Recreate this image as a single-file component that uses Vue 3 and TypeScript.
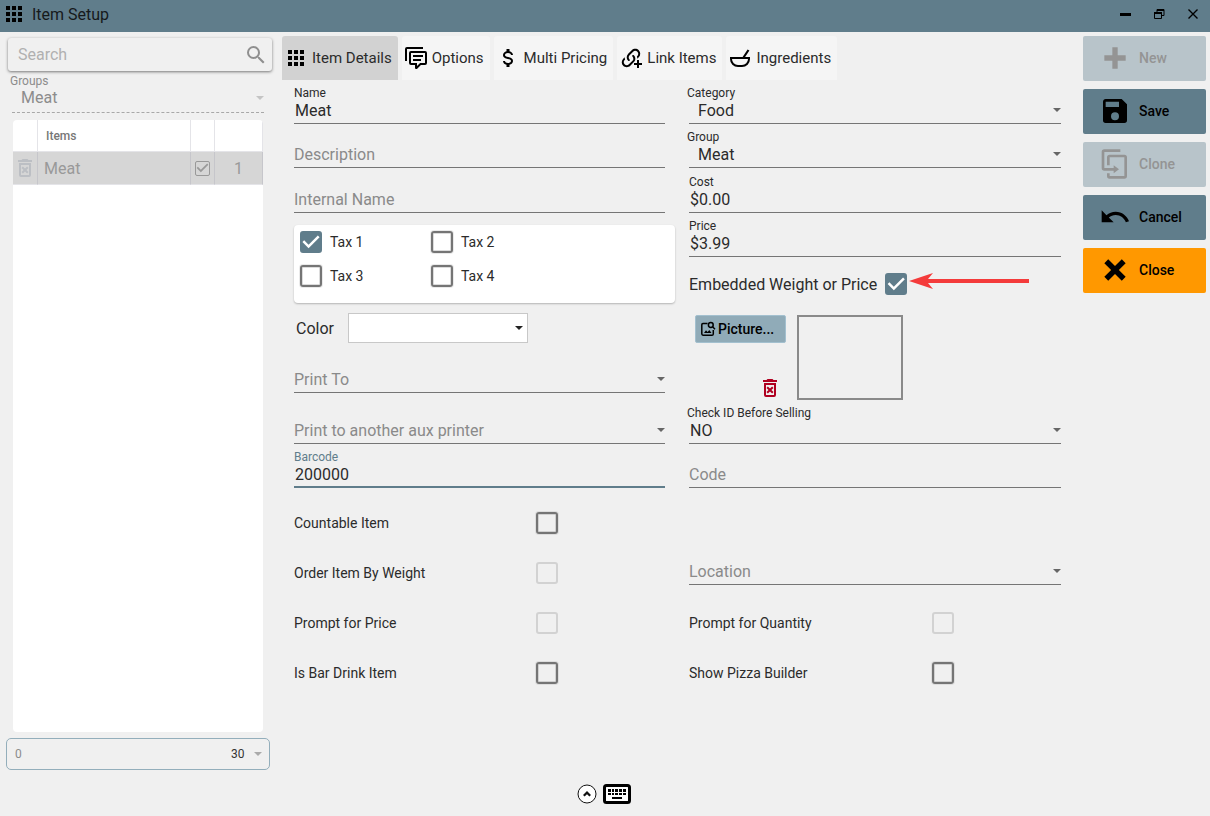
<script setup lang="ts">
import { reactive, ref } from 'vue'

const icons = {
  grid: 'M4 4h4v4H4zM10 4h4v4h-4zM16 4h4v4h-4zM4 10h4v4H4zM10 10h4v4h-4zM16 10h4v4h-4zM4 16h4v4H4zM10 16h4v4h-4zM16 16h4v4h-4z',
  comments:
    'M12,23A1,1 0 0,1 11,22V19H7A2,2 0 0,1 5,17V7A2,2 0 0,1 7,5H21A2,2 0 0,1 23,7V17A2,2 0 0,1 21,19H16.9L13.2,22.71C13,22.89 12.76,23 12.5,23H12M13,17V20.08L16.08,17H21V7H7V17H13M3,15H1V3A2,2 0 0,1 3,1H19V3H3V15M9,9H19V11H9V9M9,13H17V15H9V13Z',
  dollar:
    'M7,15H9C9,16.08 10.37,17 12,17C13.63,17 15,16.08 15,15C15,13.9 13.96,13.5 11.76,12.97C9.64,12.44 7,11.78 7,9C7,7.21 8.47,5.69 10.5,5.18V3H13.5V5.18C15.53,5.69 17,7.21 17,9H15C15,7.92 13.63,7 12,7C10.37,7 9,7.92 9,9C9,10.1 10.04,10.5 12.24,11.03C14.36,11.56 17,12.22 17,15C17,16.79 15.53,18.31 13.5,18.82V21H10.5V18.82C8.47,18.31 7,16.79 7,15Z',
  link:
    'M10.59,13.41C11,13.8 11,14.44 10.59,14.83C10.2,15.22 9.56,15.22 9.17,14.83C7.22,12.88 7.22,9.71 9.17,7.76L12.71,4.22C14.66,2.27 17.83,2.27 19.78,4.22C21.73,6.17 21.73,9.34 19.78,11.29L18.29,12.78C18.3,11.96 18.17,11.14 17.89,10.36L18.36,9.88C19.54,8.71 19.54,6.81 18.36,5.64C17.19,4.46 15.29,4.46 14.12,5.64L10.59,9.17C9.41,10.34 9.41,12.24 10.59,13.41M13.41,9.17C13.8,8.78 14.44,8.78 14.83,9.17C16.2,10.5 16.6,12.4 16.2,14L14.2,14.03C14.5,12.8 14.2,11.4 13.41,10.59C13,10.2 13,9.56 13.41,9.17ZM13,15.24L13,18.07L11.29,19.78C9.34,21.73 6.17,21.73 4.22,19.78C2.27,17.83 2.27,14.66 4.22,12.71L5.71,11.22C5.7,12.04 5.83,12.86 6.11,13.65L5.64,14.12C4.46,15.29 4.46,17.19 5.64,18.36C6.81,19.54 8.71,19.54 9.88,18.36ZM13,18.07V15.24L14.2,14.03L16.2,14L15.6,15.3ZM18,14H20V17H23V19H20V22H18V19H15V17H18Z',
  bowl:
    'M2,11H14.6L19.6,3.4L21.4,4.6L17.1,11H22V13A8,8 0 0,1 14,21H10A8,8 0 0,1 2,13ZM4,13A6,6 0 0,0 10,19H14A6,6 0 0,0 20,13Z',
  search:
    'M9.5,3A6.5,6.5 0 0,1 16,9.5C16,11.11 15.41,12.59 14.44,13.73L14.71,14H15.5L20.5,19L19,20.5L14,15.5V14.71L13.73,14.44C12.59,15.41 11.11,16 9.5,16A6.5,6.5 0 0,1 3,9.5A6.5,6.5 0 0,1 9.5,3M9.5,5C7,5 5,7 5,9.5C5,12 7,14 9.5,14C12,14 14,12 14,9.5C14,7 12,5 9.5,5Z',
  trash:
    'M14.12,10.47L12,12.59L9.87,10.47L8.46,11.88L10.59,14L8.47,16.12L9.88,17.53L12,15.41L14.12,17.53L15.53,16.12L13.41,14L15.53,11.88L14.12,10.47M15.5,4L14.5,3H9.5L8.5,4H5V6H19V4H15.5M6,19A2,2 0 0,0 8,21H16A2,2 0 0,0 18,19V7H6V19M8,9H16V19H8V9Z',
  plus: 'M20 14H14V20H10V14H4V10H10V4H14V10H20V14Z',
  save: 'M15,9H5V5H15M12,19A3,3 0 0,1 9,16A3,3 0 0,1 12,13A3,3 0 0,1 15,16A3,3 0 0,1 12,19M17,3H5C3.89,3 3,3.9 3,5V19A2,2 0 0,0 5,21H19A2,2 0 0,0 21,19V7L17,3Z',
  clone:
    'M11,17H4A2,2 0 0,1 2,15V3A2,2 0 0,1 4,1H16V3H4V15H11V13L15,16L11,19V17M19,21V7H8V13H6V7A2,2 0 0,1 8,5H19A2,2 0 0,1 21,7V21A2,2 0 0,1 19,23H8A2,2 0 0,1 6,21V19H8V21H19Z',
  undo: 'M12.5,8C9.85,8 7.45,9 5.6,10.6L2,7V16H11L7.38,12.38C8.77,11.22 10.54,10.5 12.5,10.5C16.04,10.5 19.08,12.81 20.14,16L22.5,15.22C21.1,11.03 17.15,8 12.5,8Z',
  close:
    'M20 6.91L17.09 4L12 9.09L6.91 4L4 6.91L9.09 12L4 17.09L6.91 20L12 14.91L17.09 20L20 17.09L14.91 12L20 6.91Z',
}

const activeTab = ref('Item Details')
const tabs = [
  { label: 'Item Details', icon: icons.grid },
  { label: 'Options', icon: icons.comments },
  { label: 'Multi Pricing', icon: icons.dollar },
  { label: 'Link Items', icon: icons.link },
  { label: 'Ingredients', icon: icons.bowl },
]

const actions = [
  { label: 'New', icon: icons.plus, disabled: true, kind: 'plain' },
  { label: 'Save', icon: icons.save, disabled: false, kind: 'plain' },
  { label: 'Clone', icon: icons.clone, disabled: true, kind: 'plain' },
  { label: 'Cancel', icon: icons.undo, disabled: false, kind: 'plain' },
  { label: 'Close', icon: icons.close, disabled: false, kind: 'warn' },
]

const taxes = reactive([
  { label: 'Tax 1', on: true },
  { label: 'Tax 2', on: false },
  { label: 'Tax 3', on: false },
  { label: 'Tax 4', on: false },
])

const flagsLeft = reactive([
  { label: 'Countable Item', on: false, disabled: false },
  { label: 'Order Item By Weight', on: false, disabled: true },
  { label: 'Prompt for Price', on: false, disabled: true },
  { label: 'Is Bar Drink Item', on: false, disabled: false },
])
const flagsRight = reactive([
  { label: 'Prompt for Quantity', on: false, disabled: true },
  { label: 'Show Pizza Builder', on: false, disabled: false },
])

const item = reactive({
  name: 'Meat',
  description: '',
  internalName: '',
  cost: '$0.00',
  price: '$3.99',
  barcode: '200000',
  code: '',
  embedded: true,
})
</script>

<template>
  <div class="window">
    <header class="titlebar">
      <svg class="i24" viewBox="0 0 24 24"><path :d="icons.grid" /></svg>
      <h1>Item Setup</h1>
      <button type="button" aria-label="Minimize">
        <svg width="12" height="12" viewBox="0 0 12 12"><path d="M1 5h11v3H1z" /></svg>
      </button>
      <button type="button" aria-label="Restore">
        <svg width="12" height="12" viewBox="0 0 12 12" fill="none" stroke="#000">
          <path d="M1.5 5h7v5.5h-7zM4 4V1.5h7v6H9" /><path d="M1 5h8M4 2h7" stroke-width="2" />
        </svg>
      </button>
      <button type="button" aria-label="Close window">
        <svg width="12" height="12" viewBox="0 0 12 12" fill="none" stroke="#000" stroke-width="1.4">
          <path d="M1.5 1.5l9 9M10.5 1.5l-9 9" />
        </svg>
      </button>
    </header>

    <div class="body">
      <aside class="sidebar">
        <div class="search">
          <input type="search" placeholder="Search" aria-label="Search" />
          <svg class="i24" viewBox="0 0 24 24"><path :d="icons.search" /></svg>
        </div>
        <div class="groups">
          <label for="groups">Groups</label>
          <div class="pick">
            <select id="groups" disabled><option>Meat</option></select>
            <svg class="caret" viewBox="0 0 8 4"><path d="M0 0h8L4 4z" /></svg>
          </div>
        </div>
        <div class="list">
          <table>
            <thead>
              <tr><th class="c-del"></th><th class="c-name">Items</th><th class="c-on"></th><th></th></tr>
            </thead>
            <tbody>
              <tr>
                <td><svg class="i24 faint" viewBox="0 0 24 24"><path :d="icons.trash" /></svg></td>
                <td class="c-name">Meat</td>
                <td><input class="mini" type="checkbox" checked disabled aria-label="Meat enabled" /></td>
                <td>1</td>
              </tr>
            </tbody>
          </table>
        </div>
        <div class="pager">
          <span>0</span>
          <div class="pick">
            <select aria-label="Rows per page"><option>30</option></select>
            <svg class="caret" viewBox="0 0 8 4"><path d="M0 0h8L4 4z" /></svg>
          </div>
        </div>
      </aside>

      <main class="content">
        <nav class="tabs">
          <button
            v-for="tab in tabs"
            :key="tab.label"
            type="button"
            :class="{ active: tab.label === activeTab }"
            @click="activeTab = tab.label"
          >
            <svg class="i24" viewBox="0 0 24 24"><path :d="tab.icon" /></svg>
            <span>{{ tab.label }}</span>
          </button>
        </nav>

        <form class="form" @submit.prevent>
          <div class="column left">
            <div class="field">
              <label for="name">Name</label>
              <input id="name" v-model="item.name" type="text" />
            </div>
            <div class="field">
              <input v-model="item.description" type="text" placeholder="Description" aria-label="Description" />
            </div>
            <div class="field">
              <input v-model="item.internalName" type="text" placeholder="Internal Name" aria-label="Internal Name" />
            </div>

            <div class="taxes">
              <label v-for="tax in taxes" :key="tax.label">
                <input v-model="tax.on" class="box" type="checkbox" />
                <span>{{ tax.label }}</span>
              </label>
            </div>

            <div class="color">
              <label for="color">Color</label>
              <div class="pick">
                <select id="color"><option></option></select>
                <svg class="caret" viewBox="0 0 8 4"><path d="M0 0h8L4 4z" /></svg>
              </div>
            </div>

            <div class="field">
              <div class="pick">
                <select class="empty" aria-label="Print To"><option>Print To</option></select>
                <svg class="caret" viewBox="0 0 8 4"><path d="M0 0h8L4 4z" /></svg>
              </div>
            </div>
            <div class="field">
              <div class="pick">
                <select class="empty" aria-label="Print to another aux printer">
                  <option>Print to another aux printer</option>
                </select>
                <svg class="caret" viewBox="0 0 8 4"><path d="M0 0h8L4 4z" /></svg>
              </div>
            </div>
            <div class="field current">
              <label for="barcode">Barcode</label>
              <input id="barcode" v-model="item.barcode" type="text" />
            </div>

            <label v-for="flag in flagsLeft" :key="flag.label" class="flag">
              <span>{{ flag.label }}</span>
              <input v-model="flag.on" class="box" type="checkbox" :disabled="flag.disabled" />
            </label>
          </div>

          <div class="column right">
            <div class="field choice indent">
              <label for="category">Category</label>
              <div class="pick">
                <select id="category"><option>Food</option></select>
                <svg class="caret" viewBox="0 0 8 4"><path d="M0 0h8L4 4z" /></svg>
              </div>
            </div>
            <div class="field choice indent">
              <label for="group">Group</label>
              <div class="pick">
                <select id="group"><option>Meat</option></select>
                <svg class="caret" viewBox="0 0 8 4"><path d="M0 0h8L4 4z" /></svg>
              </div>
            </div>
            <div class="field">
              <label for="cost">Cost</label>
              <input id="cost" v-model="item.cost" type="text" />
            </div>
            <div class="field">
              <label for="price">Price</label>
              <input id="price" v-model="item.price" type="text" />
            </div>

            <div class="embedded">
              <label>
                <span>Embedded Weight or Price</span>
                <input v-model="item.embedded" class="box" type="checkbox" />
              </label>
              <svg class="arrow" viewBox="0 0 120 16">
                <path d="M0 8L24 0L19 6H120V10H19L24 16Z" />
              </svg>
            </div>

            <div class="picture">
              <div class="picture-tools">
                <button type="button" class="browse">
                  <svg width="16" height="16" viewBox="0 0 16 16" fill="none" stroke="#000" stroke-width="1.5">
                    <path d="M7.5 2.5H3A1.3 1.3 0 0 0 1.8 3.8V13A1.3 1.3 0 0 0 3 14.2H12A1.3 1.3 0 0 0 13.3 13V9" />
                    <circle cx="10.8" cy="4" r="2.4" /><path d="M12.6 5.8L15 8.2" />
                    <path d="M4 12L6 9.3L7.6 11L9.3 9L11.5 12Z" fill="#000" stroke="none" />
                  </svg>
                  <span>Picture...</span>
                </button>
                <button type="button" class="remove" aria-label="Remove picture">
                  <svg class="i24" viewBox="0 0 24 24"><path :d="icons.trash" /></svg>
                </button>
              </div>
              <div class="preview"></div>
            </div>

            <div class="field choice">
              <label for="checkid">Check ID Before Selling</label>
              <div class="pick">
                <select id="checkid"><option>NO</option></select>
                <svg class="caret" viewBox="0 0 8 4"><path d="M0 0h8L4 4z" /></svg>
              </div>
            </div>
            <div class="field">
              <input v-model="item.code" type="text" placeholder="Code" aria-label="Code" />
            </div>

            <div class="field location">
              <div class="pick">
                <select class="empty" aria-label="Location"><option>Location</option></select>
                <svg class="caret" viewBox="0 0 8 4"><path d="M0 0h8L4 4z" /></svg>
              </div>
            </div>
            <label v-for="flag in flagsRight" :key="flag.label" class="flag">
              <span>{{ flag.label }}</span>
              <input v-model="flag.on" class="box" type="checkbox" :disabled="flag.disabled" />
            </label>
          </div>
        </form>
      </main>

      <div class="actions">
        <button
          v-for="action in actions"
          :key="action.label"
          type="button"
          :class="action.kind"
          :disabled="action.disabled"
        >
          <svg viewBox="0 0 24 24"><path :d="action.icon" /></svg>
          <span>{{ action.label }}</span>
        </button>
      </div>
    </div>

    <footer class="footer">
      <button type="button" aria-label="Expand">
        <svg width="20" height="20" viewBox="0 0 20 20" fill="none" stroke="#111">
          <circle cx="10" cy="10" r="9" fill="#fff" /><path d="M6.8 11.8L10 8.6L13.2 11.8" stroke-width="2.2" />
        </svg>
      </button>
      <button type="button" aria-label="Keyboard">
        <svg width="28" height="20" viewBox="0 0 28 20">
          <rect x="1.5" y="1.5" width="25" height="17" rx="2" fill="#fff" stroke="#000" stroke-width="3" />
          <path
            d="M5 5h3v3H5zM9 5h2v3H9zM12 5h3v3h-3zM16 5h3v3h-3zM20 5h3v3h-3zM5 9h3v2H5zM9 9h2v2H9zM12 9h3v2h-3zM16 9h3v2h-3zM20 9h3v2h-3zM9 13h10v2H9z"
          />
        </svg>
      </button>
    </footer>
  </div>
</template>

<style>
body {
  margin: 0;
  background: #f0f0f0;
}
</style>

<style scoped>
* {
  box-sizing: border-box;
}
.window {
  display: flex;
  flex-direction: column;
  min-height: 100vh;
  background: #f0f0f0;
  color: #2b2b2b;
  font-family: Roboto, "Liberation Sans", sans-serif;
  font-size: 16px;
}
button,
input,
select {
  margin: 0;
  padding: 0;
  border: 0;
  border-radius: 0;
  outline: 0;
  background: none;
  color: inherit;
  font: inherit;
  appearance: none;
}
.i24 {
  flex: none;
  display: block;
  width: 24px;
  height: 24px;
}
.titlebar {
  display: flex;
  align-items: center;
  height: 32px;
  padding: 0 0 4px 2px;
  background: #607d8b;
}
.titlebar h1 {
  flex: 1;
  margin: 0;
  padding: 2px 0 0 6px;
  font-size: 16px;
  line-height: 20px;
  font-weight: 400;
  color: #16191b;
}
.titlebar button {
  display: flex;
  align-items: center;
  justify-content: center;
  width: 34px;
  height: 28px;
}
.body {
  flex: 1;
  display: flex;
}

/* caret drawn in the same grid cell as its select */
.pick {
  display: grid;
  align-items: center;
}
.pick > * {
  grid-area: 1 / 1;
}
.pick select {
  width: 100%;
  opacity: 1;
}
.caret {
  justify-self: end;
  width: 8px;
  height: 4px;
  fill: #666;
  pointer-events: none;
}

.sidebar {
  flex: none;
  display: flex;
  flex-direction: column;
  width: 282px;
  padding: 6px 12px 0 6px;
  color: #8c8c8c;
}
.search {
  display: flex;
  align-items: center;
  height: 33px;
  margin: 0 -2px 0 2px;
  padding: 0 4px 0 10px;
  border-radius: 3px;
  box-shadow: 0 1px 3px rgba(0, 0, 0, 0.5);
}
.search input {
  flex: 1;
  min-width: 0;
}
.search input::placeholder {
  color: #b0b0b0;
  opacity: 1;
}
.search svg {
  fill: #8f8f8f;
}
.groups {
  margin: 3px 6px 7px 4px;
}
.groups label {
  display: block;
  font-size: 12px;
  line-height: 14px;
}
.groups .pick {
  height: 25px;
  margin-left: 2px;
  border-bottom: 1px dashed #a8a8a8;
}
.groups select {
  padding: 0 9px 5px;
}
.groups .caret {
  margin-bottom: 5px;
  fill: #c4c4c4;
}
.list {
  flex: 1;
  margin: 0 7px;
  background: #fff;
  border-radius: 4px;
  overflow: hidden;
}
table {
  width: 100%;
  table-layout: fixed;
  border-collapse: separate;
  border-spacing: 0;
}
th,
td {
  height: 32px;
  padding: 0;
  border-right: 1px solid #e4e4e8;
  border-bottom: 1px solid #e4e4e8;
  text-align: center;
}
th {
  font-size: 12px;
  font-weight: 500;
  color: #777;
}
td {
  height: 33px;
  background: #d6d6d6;
  border-right-color: #c6c6cb;
  color: #999;
}
td svg,
td input {
  margin: 0 auto;
}
.faint {
  fill: #bcbfc4;
}
.c-del {
  width: 25px;
}
.c-on {
  width: 24px;
}
th:last-child {
  width: 48px;
}
th.c-name {
  padding-left: 8px;
  text-align: left;
}
td.c-name {
  padding-left: 6px;
  text-align: left;
}
.pager {
  display: flex;
  align-items: center;
  justify-content: space-between;
  height: 32px;
  margin-top: 6px;
  padding: 0 7px 0 8px;
  border: 1px solid #93aebb;
  border-radius: 5px;
  font-size: 12px;
}
.pager .pick {
  width: 31px;
  color: #333;
}
.pager .caret {
  fill: #aaa;
}

.content {
  flex: 1;
  min-width: 0;
  padding-top: 4px;
}
.tabs {
  display: flex;
  gap: 4px;
}
.tabs button {
  display: flex;
  align-items: center;
  gap: 4px;
  height: 44px;
  padding: 0 6px 0 2px;
  border-radius: 3px 3px 0 0;
  background: #f5f5f5;
  font-size: 15px;
}
.tabs button.active {
  background: #d2d2d2;
}
.form {
  display: grid;
  grid-template-columns: 371fr 372fr;
  column-gap: 24px;
  padding-left: 12px;
}
.column {
  display: grid;
  min-width: 0;
}
.left {
  grid-template-rows: 44px 44px 45px 90px 40px 50px 51px 44px 60px 50px 50px 50px;
}
.right {
  grid-template-rows: 44px 44px 45px 44px 58px 85px 44px 44px 97px 63px 50px;
}
.field {
  display: flex;
  flex-direction: column;
  justify-content: flex-end;
  padding-bottom: 3px;
  border-bottom: 1px solid #757575;
}
.field label {
  font-size: 12px;
  line-height: 14px;
}
.choice label {
  margin-left: -2px;
}
.field input,
.field select {
  width: 100%;
  height: 20px;
  padding-left: 1px;
}
.field input::placeholder {
  color: #8a8a8a;
  opacity: 1;
}
.field input:placeholder-shown,
.field select.empty {
  padding-left: 0;
  color: #8a8a8a;
}
.indent select {
  padding-left: 9px;
}
.current {
  padding-bottom: 2px;
  border-bottom: 2px solid #607d8b;
}
.current label {
  color: #607d8b;
}

.box,
.mini {
  flex: none;
  display: block;
  width: 22px;
  height: 22px;
  border: 2px solid #757575;
  border-radius: 3px;
  box-shadow: 0 0 0 1px rgba(117, 117, 117, 0.15), inset 0 0 0 1px rgba(117, 117, 117, 0.25);
}
.box:disabled {
  border-color: #d2d2d2;
  box-shadow: none;
}
.box:checked {
  border-color: #607d8b;
  background: #607d8b;
  box-shadow: none;
}
.box:checked::before,
.mini:checked::before {
  content: "";
  display: block;
  width: 22px;
  height: 22px;
  margin: -2px;
  background: #fff;
  clip-path: polygon(39% 78%, 11% 50%, 19% 42%, 39% 62%, 81% 20%, 89% 28%);
}
.mini {
  width: 15px;
  height: 15px;
  border: 1px solid #999;
  border-radius: 2px;
  box-shadow: none;
}
.mini:checked::before {
  width: 15px;
  height: 15px;
  margin: -1px;
  background: #999;
}

.taxes {
  display: grid;
  grid-template-columns: 131px 131px;
  grid-template-rows: 34px 34px;
  margin: 12px -10px 0 0;
  padding-left: 6px;
  border-radius: 4px;
  background: #fff;
  box-shadow: 0 1px 2px rgba(0, 0, 0, 0.25);
  font-size: 14px;
}
.taxes label {
  display: flex;
  align-items: center;
  gap: 8px;
}
.color {
  display: flex;
  align-items: center;
  gap: 14px;
  padding: 10px 0 0 2px;
}
.color .pick {
  width: 180px;
  height: 30px;
  border: 1px solid #c8c8c8;
  background: #fff;
}
.color select {
  height: 28px;
}
.color .caret {
  margin-right: 4px;
  fill: #222;
}
.flag {
  display: grid;
  grid-template-columns: 242fr 129fr;
  align-items: center;
  font-size: 14px;
}
.current + .flag {
  padding-top: 10px;
}
.location + .flag {
  padding-top: 13px;
}

.embedded {
  display: flex;
  align-items: center;
  padding-bottom: 4px;
}
.embedded label {
  display: flex;
  align-items: center;
  gap: 8px;
}
.arrow {
  flex: none;
  width: 120px;
  height: 16px;
  margin: 0 0 6px 2px;
  fill: #f43b3b;
}
.picture {
  display: flex;
  gap: 11px;
  padding-left: 6px;
}
.picture-tools {
  display: flex;
  flex-direction: column;
  justify-content: space-between;
  width: 91px;
}
.browse {
  display: flex;
  align-items: center;
  gap: 2px;
  height: 28px;
  padding: 0 4px;
  border: 1px solid #a3c0cf;
  border-radius: 2px;
  background: #90abb8;
  color: #000;
  font-size: 14px;
  font-weight: 500;
}
.remove {
  align-self: flex-end;
  margin-right: 4px;
  fill: #b00020;
}
.preview {
  width: 106px;
  border: 2px solid #8a8a8a;
}

.actions {
  flex: none;
  display: flex;
  flex-direction: column;
  gap: 8px;
  width: 149px;
  padding: 4px 4px 0 22px;
}
.actions button {
  display: flex;
  align-items: center;
  gap: 8px;
  height: 45px;
  padding: 0 0 1px 16px;
  border-radius: 2px;
  background: #607d8b;
  color: #000;
  font-size: 14px;
  font-weight: 500;
}
.actions svg {
  width: 32px;
  height: 32px;
}
.actions button:disabled {
  background: #b8c4ca;
  color: #949494;
  fill: #949494;
}
.actions .warn {
  background: #ff9800;
}
.footer {
  display: flex;
  align-items: center;
  justify-content: center;
  gap: 6px;
  height: 46px;
  padding: 2px 3px 0 0;
}
.footer svg {
  display: block;
}
</style>
